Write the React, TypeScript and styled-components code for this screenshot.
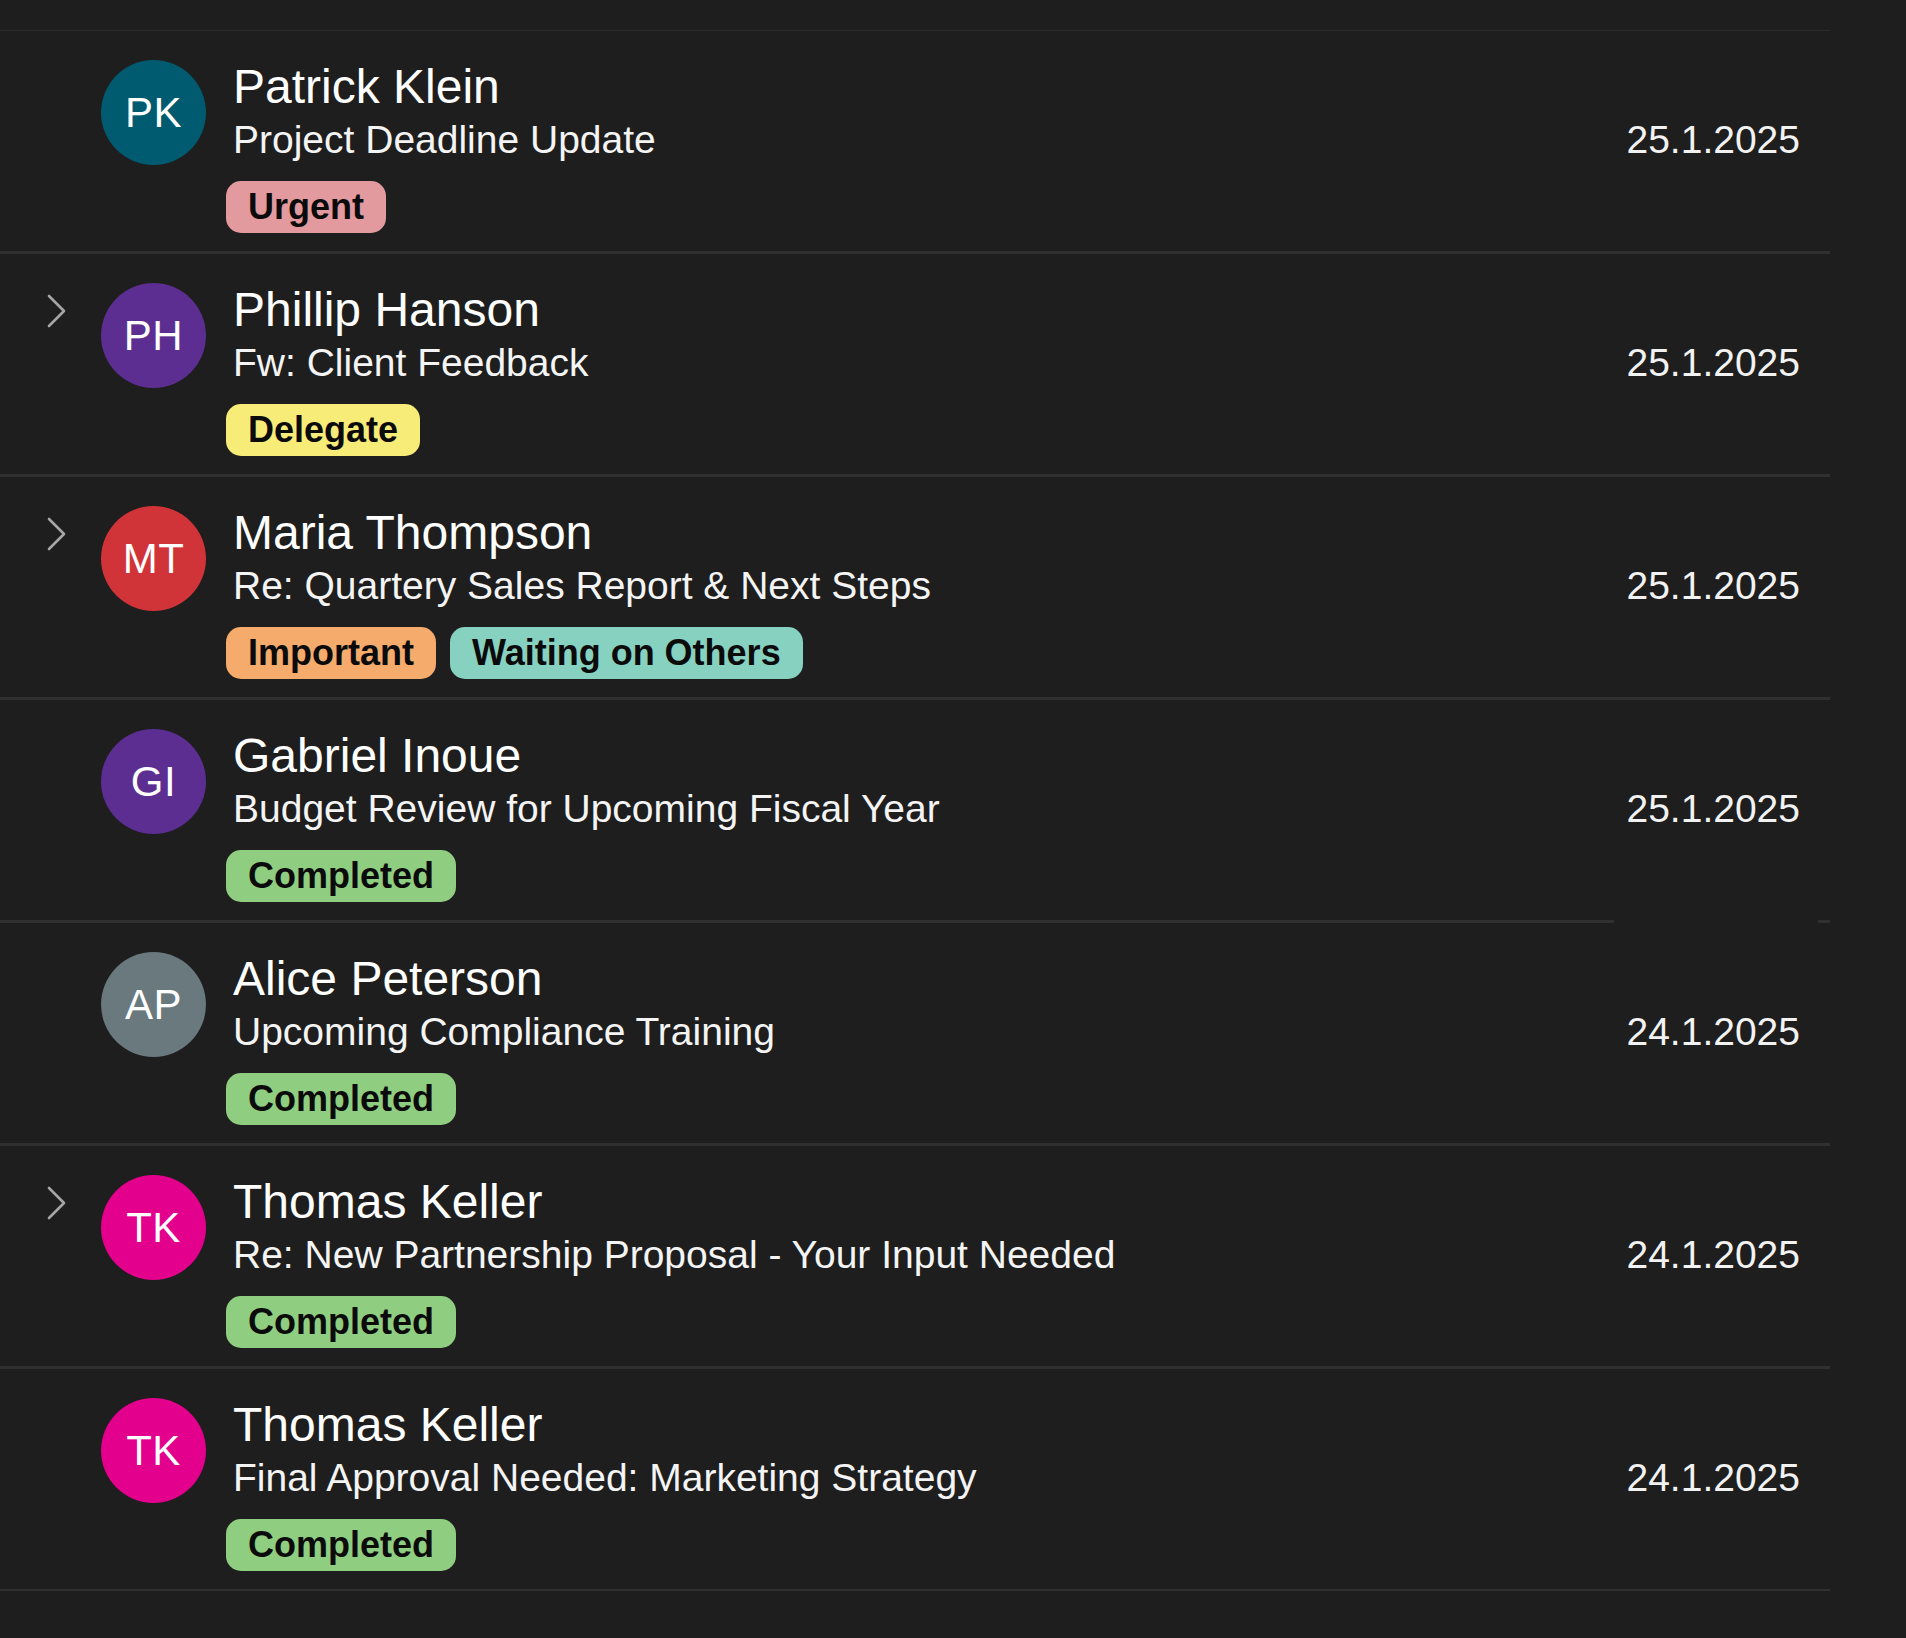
import React from "react";
import styled, { createGlobalStyle } from "styled-components";

const GlobalStyle = createGlobalStyle`
  html, body {
    margin: 0;
    padding: 0;
    background: #1e1e1e;
  }
  body {
    font-family: "Liberation Sans", Arial, Helvetica, sans-serif;
    -webkit-font-smoothing: antialiased;
  }
`;

const Page = styled.div`
  width: 1830px;
  padding-top: 30px;
  padding-bottom: 46px;
`;

const List = styled.ul`
  list-style: none;
  margin: 0;
  padding: 0;
  border-top: 1px solid #2a2a2a;
`;

const Row = styled.li<{ $last?: boolean; $gap?: boolean }>`
  display: flex;
  align-items: flex-start;
  padding: 28px 30px 18px 40px;
  border-bottom: ${(p) => (p.$last ? "2px" : "3px")} solid #303030;
  ${(p) =>
    p.$gap
      ? `border-image: linear-gradient(to right, #303030 0, #303030 1613px, #1e1e1e 1613px, #1e1e1e 1817px, #303030 1817px) 1;`
      : ""}
`;

const ChevronSlot = styled.div`
  flex: none;
  width: 61px;
  height: 60px;
`;

const ChevronIcon = styled.svg`
  display: block;
  margin-left: 6px;
  margin-top: 12px;
`;

const Avatar = styled.div<{ $bg: string }>`
  flex: none;
  width: 105px;
  height: 105px;
  margin-top: 1px;
  border-radius: 50%;
  background: ${(p) => p.$bg};
  color: #ffffff;
  display: flex;
  align-items: center;
  justify-content: center;
  font-size: 42px;
  margin-right: 27px;
  letter-spacing: 0.5px;
`;

const Content = styled.div`
  flex: 1;
  min-width: 0;
  display: flex;
  flex-direction: column;
`;

const Name = styled.div`
  font-size: 48px;
  line-height: 56px;
  color: #ffffff;
  white-space: nowrap;
`;

const Subject = styled.div`
  margin-top: 1px;
  font-size: 39px;
  line-height: 48px;
  color: #f4f4f4;
  white-space: nowrap;
`;

const Tags = styled.div`
  display: flex;
  gap: 14px;
  margin-top: 17px;
  margin-left: -7px;
`;

const Tag = styled.span<{ $bg: string }>`
  display: inline-flex;
  align-items: center;
  height: 52px;
  padding: 0 22px;
  border-radius: 15px;
  background: ${(p) => p.$bg};
  color: #0b0b0b;
  font-size: 36px;
  font-weight: 700;
  white-space: nowrap;
`;

const DateText = styled.div`
  flex: none;
  margin-top: 57px;
  font-size: 39px;
  line-height: 48px;
  color: #f2f2f2;
  white-space: nowrap;
`;

const TAG_COLORS: Record<string, string> = {
  Urgent: "#e39a9e",
  Delegate: "#f8ec78",
  Important: "#f4ab6b",
  "Waiting on Others": "#86d1c0",
  Completed: "#8fce80",
};

type Mail = {
  initials: string;
  color: string;
  name: string;
  subject: string;
  tags: string[];
  date: string;
  thread?: boolean;
  gap?: boolean;
};

const MAILS: Mail[] = [
  { initials: "PK", color: "#005b70", name: "Patrick Klein", subject: "Project Deadline Update", tags: ["Urgent"], date: "25.1.2025" },
  { initials: "PH", color: "#5c2e91", name: "Phillip Hanson", subject: "Fw: Client Feedback", tags: ["Delegate"], date: "25.1.2025", thread: true },
  { initials: "MT", color: "#d13438", name: "Maria Thompson", subject: "Re: Quartery Sales Report & Next Steps", tags: ["Important", "Waiting on Others"], date: "25.1.2025", thread: true },
  { initials: "GI", color: "#5c2e91", name: "Gabriel Inoue", subject: "Budget Review for Upcoming Fiscal Year", tags: ["Completed"], date: "25.1.2025", gap: true },
  { initials: "AP", color: "#69797e", name: "Alice Peterson", subject: "Upcoming Compliance Training", tags: ["Completed"], date: "24.1.2025" },
  { initials: "TK", color: "#e3008c", name: "Thomas Keller", subject: "Re: New Partnership Proposal - Your Input Needed", tags: ["Completed"], date: "24.1.2025", thread: true },
  { initials: "TK", color: "#e3008c", name: "Thomas Keller", subject: "Final Approval Needed: Marketing Strategy", tags: ["Completed"], date: "24.1.2025" },
];

const Chevron = () => (
  <ChevronIcon width="22" height="34" viewBox="0 0 22 34" fill="none">
    <polyline points="3,2 18,17 3,32" stroke="#a6a6a6" strokeWidth="2.6" strokeLinecap="round" strokeLinejoin="round" />
  </ChevronIcon>
);

export default function App() {
  return (
    <>
      <GlobalStyle />
      <Page>
        <List>
          {MAILS.map((m, i) => (
            <Row key={i} $last={i === MAILS.length - 1} $gap={m.gap}>
              <ChevronSlot>{m.thread ? <Chevron /> : null}</ChevronSlot>
              <Avatar $bg={m.color}>{m.initials}</Avatar>
              <Content>
                <Name>{m.name}</Name>
                <Subject>{m.subject}</Subject>
                <Tags>
                  {m.tags.map((t) => (
                    <Tag key={t} $bg={TAG_COLORS[t]}>
                      {t}
                    </Tag>
                  ))}
                </Tags>
              </Content>
              <DateText>{m.date}</DateText>
            </Row>
          ))}
        </List>
      </Page>
    </>
  );
}
